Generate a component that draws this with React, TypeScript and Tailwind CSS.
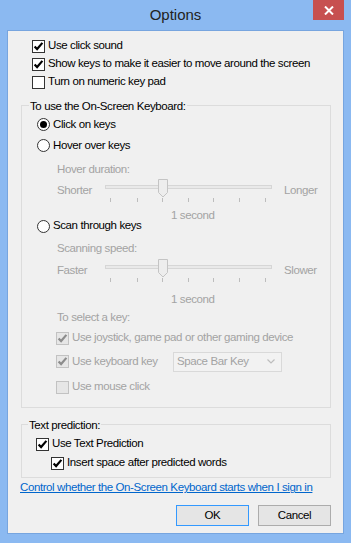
import React from "react";

const DIS = "text-[#a3a3a3]";

function Check({ checked, disabled }: { checked?: boolean; disabled?: boolean }) {
  return (
    <span
      className={
        disabled
          ? "w-[13px] h-[13px] border border-[#c2c2c2] bg-[#e6e6e6] flex items-center justify-center shrink-0"
          : "w-[13px] h-[13px] border border-[#333333] bg-white flex items-center justify-center shrink-0"
      }
    >
      {checked && (
        <svg width="11" height="11" viewBox="0 0 11 11">
          <path
            d="M1.6 5.4 L4.1 8 L9.4 1.9"
            fill="none"
            stroke={disabled ? "#8c8c8c" : "#000000"}
            strokeWidth="2.2"
          />
        </svg>
      )}
    </span>
  );
}

function Radio({ selected }: { selected?: boolean }) {
  return (
    <span className="w-[13px] h-[13px] rounded-full border border-[#333333] bg-white flex items-center justify-center shrink-0">
      {selected && <span className="w-[7px] h-[7px] rounded-full bg-black" />}
    </span>
  );
}

function SliderDrawing() {
  const ticks = [5, 32, 57, 83, 108, 134, 160];
  return (
    <svg width="167" height="24" viewBox="0 0 167 24" className="shrink-0">
      <rect x="0.5" y="6.5" width="166" height="3" fill="#e9e9e9" stroke="#d6d6d6" />
      {ticks.map((t) => (
        <line key={t} x1={t + 0.5} y1="19" x2={t + 0.5} y2="23" stroke="#bdbdbd" />
      ))}
      <polygon points="53.5,0.5 62.5,0.5 62.5,13.5 58,18 53.5,13.5" fill="#ededed" stroke="#c4c4c4" />
    </svg>
  );
}

function SliderRow({ left, right }: { left: string; right: string }) {
  return (
    <div className={`h-[24px] flex items-center pl-[35px] ${DIS}`}>
      <span className="w-[48px] shrink-0">{left}</span>
      <SliderDrawing />
      <span className="ml-[12px]">{right}</span>
    </div>
  );
}

export default function App() {
  return (
    <div className="w-[351px] h-[543px] bg-[#8bb9f1] flex flex-col font-['Liberation_Sans',Arial,sans-serif] text-[11.5px] tracking-[-0.4px] text-black select-none">
      {/* title bar */}
      <div className="h-[30px] relative flex items-center justify-center shrink-0">
        <span className="text-[15px] tracking-normal text-[#222222]">Options</span>
        <div className="absolute right-[7px] top-0 w-[31px] h-[20px] bg-[#c75050] flex items-center justify-center">
          <svg width="10" height="9" viewBox="0 0 10 9">
            <path d="M1 0.5 L9 8.5 M9 0.5 L1 8.5" stroke="white" strokeWidth="2" />
          </svg>
        </div>
      </div>

      {/* client */}
      <div className="mx-[7px] h-[504px] border border-[#77a5df] bg-[#f0f0f0] flex flex-col shrink-0">
        <div className="pt-[6px] pl-[24px] flex flex-col">
          <div className="h-[18px] flex items-center gap-[3px]">
            <Check checked />
            <span>Use click sound</span>
          </div>
          <div className="h-[18px] flex items-center gap-[3px]">
            <Check checked />
            <span>Show keys to make it easier to move around the screen</span>
          </div>
          <div className="h-[18px] flex items-center gap-[3px]">
            <Check />
            <span>Turn on numeric key pad</span>
          </div>
        </div>

        {/* group 1 */}
        <div className="mt-[14px] ml-[13px] w-[310px] border border-[#dcdcdc] relative flex flex-col pt-[8px] pb-[11px]">
          <span className="absolute left-[7px] top-[-8px] h-[16px] leading-[16px] px-[1px] bg-[#f0f0f0]">
            To use the On-Screen Keyboard:
          </span>
          <div className="h-[21px] flex items-center gap-[3px] pl-[15px]">
            <Radio selected />
            <span>Click on keys</span>
          </div>
          <div className="h-[21px] flex items-center gap-[3px] pl-[15px]">
            <Radio />
            <span>Hover over keys</span>
          </div>
          <div className={`mt-[5px] h-[18px] flex items-center pl-[35px] ${DIS}`}>Hover duration:</div>
          <SliderRow left="Shorter" right="Longer" />
          <div className={`mt-[6px] h-[14px] flex items-center pl-[149px] ${DIS}`}>1 second</div>
          <div className="mt-[-6px] h-[18px] flex items-center gap-[3px] pl-[15px]">
            <Radio />
            <span>Scan through keys</span>
          </div>
          <div className={`mt-[5px] h-[18px] flex items-center pl-[35px] ${DIS}`}>Scanning speed:</div>
          <div className="mt-[1px]">
            <SliderRow left="Faster" right="Slower" />
          </div>
          <div className={`mt-[10px] h-[14px] flex items-center pl-[149px] ${DIS}`}>1 second</div>
          <div className={`mt-[2px] h-[18px] flex items-center pl-[35px] ${DIS}`}>To select a key:</div>
          <div className={`mt-[2px] h-[18px] flex items-center gap-[3px] pl-[34px] ${DIS}`}>
            <Check checked disabled />
            <span>Use joystick, game pad or other gaming device</span>
          </div>
          <div className={`mt-[4px] h-[21px] flex items-center pl-[34px] ${DIS}`}>
            <div className="w-[117px] flex items-center gap-[3px] shrink-0">
              <Check checked disabled />
              <span>Use keyboard key</span>
            </div>
            <div className="w-[109px] h-[20px] border border-[#d9d9d9] bg-[#f2f2f2] flex items-center justify-between pl-[3px] pr-[6px]">
              <span>Space Bar Key</span>
              <svg width="8" height="5" viewBox="0 0 8 5">
                <path d="M0.5 0.5 L4 4 L7.5 0.5" fill="none" stroke="#bdbdbd" strokeWidth="1.2" />
              </svg>
            </div>
          </div>
          <div className={`mt-[6px] h-[18px] flex items-center gap-[3px] pl-[34px] ${DIS}`}>
            <Check disabled />
            <span>Use mouse click</span>
          </div>
        </div>

        {/* group 2 */}
        <div className="mt-[16px] ml-[13px] w-[310px] border border-[#dcdcdc] relative flex flex-col pt-[10px] pb-[5px]">
          <span className="absolute left-[6px] top-[-8px] h-[16px] leading-[16px] px-[1px] bg-[#f0f0f0]">
            Text prediction:
          </span>
          <div className="h-[18px] flex items-center gap-[3px] pl-[14px]">
            <Check checked />
            <span>Use Text Prediction</span>
          </div>
          <div className="mt-[1px] h-[18px] flex items-center gap-[3px] pl-[29px]">
            <Check checked />
            <span>Insert space after predicted words</span>
          </div>
        </div>

        <div className="mt-[2px] h-[16px] flex items-center pl-[12px]">
          <span className="text-[#0066cc] underline">Control whether the On-Screen Keyboard starts when I sign in</span>
        </div>

        <div className="mt-[9px] flex justify-end gap-[9px] pr-[12px]">
          <div className="w-[73px] h-[21px] border border-[#3399ff] bg-[#e5e5e5] flex items-center justify-center">
            OK
          </div>
          <div className="w-[73px] h-[21px] border border-[#acacac] bg-[#e5e5e5] flex items-center justify-center">
            Cancel
          </div>
        </div>
      </div>
    </div>
  );
}
